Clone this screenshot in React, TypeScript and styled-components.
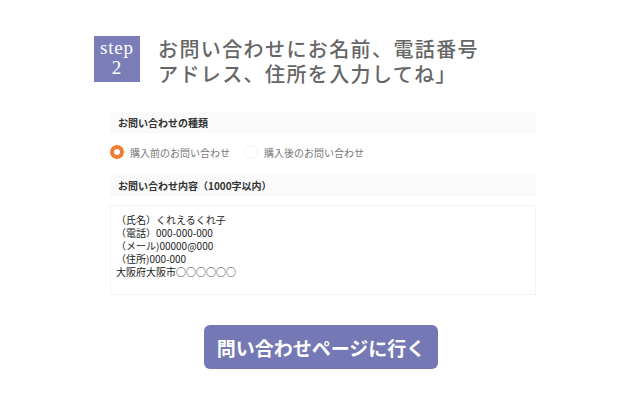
import React from 'react';
import styled, { createGlobalStyle } from 'styled-components';

const GlobalStyle = createGlobalStyle`
  body {
    margin: 0;
    background: #fff;
    font-family: "Noto Sans CJK JP", "Noto Sans", sans-serif;
  }
`;

const Page = styled.div`
  width: 640px;
  height: 411px;
  padding-top: 36px;
  box-sizing: border-box;
`;

const Header = styled.div`
  display: flex;
  align-items: flex-start;
  gap: 18px;
  margin-left: 94px;
`;

const StepBadge = styled.div`
  width: 46px;
  height: 46px;
  background: #7b7db8;
  color: #fff;
  font-family: "Liberation Serif", "DejaVu Serif", serif;
  font-size: 19px;
  line-height: 20px;
  letter-spacing: 0.8px;
  display: flex;
  flex-direction: column;
  align-items: center;
  justify-content: center;
  padding-bottom: 2px;
  box-sizing: border-box;
`;

const Title = styled.h1`
  margin: 0;
  font-size: 20px;
  font-weight: 500;
  color: #666;
  letter-spacing: 1.4px;
`;

const TitleLine = styled.span`
  display: block;
  height: 25px;
  line-height: 25px;
`;

const Form = styled.div`
  width: 426px;
  margin: 26px 0 0 110px;
  display: flex;
  flex-direction: column;
`;

const SectionLabel = styled.div`
  height: 21px;
  background: #fafafa;
  padding-left: 8px;
  display: flex;
  align-items: center;
  font-size: 10px;
  font-weight: 700;
  color: #333;
`;

const RadioRow = styled.div`
  display: flex;
  align-items: center;
  height: 42px;
  padding-bottom: 4px;
  box-sizing: border-box;
  gap: 14px;
`;

const RadioOption = styled.label`
  display: flex;
  align-items: center;
  gap: 6px;
  font-size: 10px;
  color: #777;
`;

const RadioDot = styled.span<{ $checked?: boolean }>`
  width: 14px;
  height: 14px;
  border-radius: 50%;
  box-sizing: border-box;
  background: #fff;
  border: ${({ $checked }) => ($checked ? '4px solid #f07b32' : '1px solid #f4f4f4')};
`;

const TextBox = styled.div`
  margin-top: 9px;
  height: 90px;
  border: 1px solid #f4f4f4;
  box-sizing: border-box;
  padding: 7px 5px;
  font-size: 10px;
  line-height: 13px;
  color: #222;
  white-space: pre-line;
`;

const ButtonRow = styled.div`
  display: flex;
  justify-content: center;
  margin-top: 30px;
  padding-left: 2px;
`;

const GoButton = styled.button`
  width: 234px;
  height: 44px;
  border: none;
  border-radius: 6px;
  background: #7479b5;
  color: #fff;
  font-family: inherit;
  font-size: 19px;
  font-weight: 700;
  cursor: pointer;
`;

const inquiryText = `（氏名）くれえるくれ子
（電話）000-000-000
（メール)00000@000
（住所)000-000
大阪府大阪市○○○○○○`;

const App: React.FC = () => {
  return (
    <>
      <GlobalStyle />
      <Page>
        <Header>
          <StepBadge>
            <span>step</span>
            <span>2</span>
          </StepBadge>
          <Title>
            <TitleLine>お問い合わせにお名前、電話番号</TitleLine>
            <TitleLine>アドレス、住所を入力してね」</TitleLine>
          </Title>
        </Header>

        <Form>
          <SectionLabel>お問い合わせの種類</SectionLabel>
          <RadioRow>
            <RadioOption>
              <RadioDot $checked />
              購入前のお問い合わせ
            </RadioOption>
            <RadioOption>
              <RadioDot />
              購入後のお問い合わせ
            </RadioOption>
          </RadioRow>
          <SectionLabel>お問い合わせ内容（1000字以内）</SectionLabel>
          <TextBox>{inquiryText}</TextBox>
        </Form>

        <ButtonRow>
          <GoButton>問い合わせページに行く</GoButton>
        </ButtonRow>
      </Page>
    </>
  );
};

export default App;
